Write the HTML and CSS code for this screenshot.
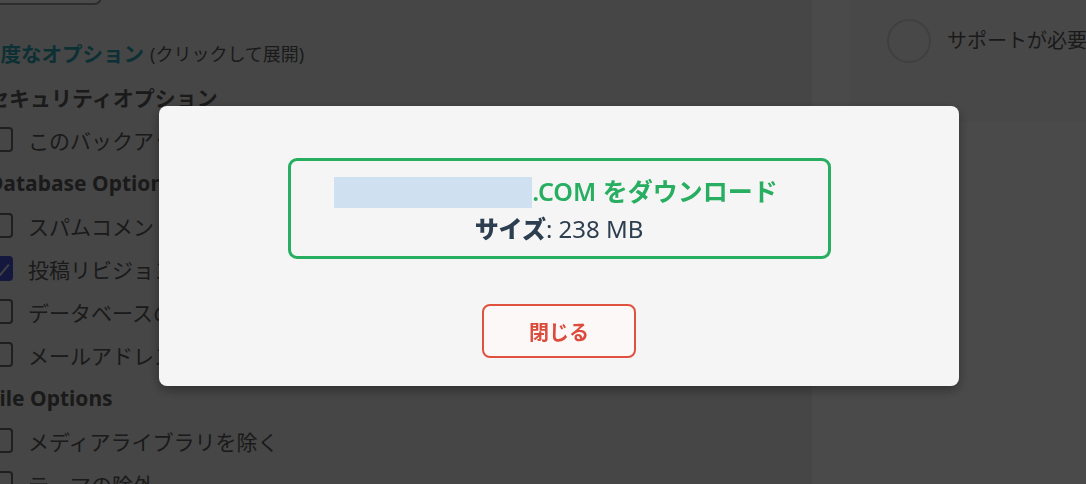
FILE: index.html
```html
<!DOCTYPE html>
<html lang="ja">
<head>
  <meta charset="UTF-8">
  <meta name="viewport" content="width=device-width, initial-scale=1">
  <title>バックアップのダウンロード</title>
  <link rel="stylesheet" href="styles.css">
</head>
<body>

<div class="page">
  <div class="main">
    <div class="options">
      <div class="top-button"></div>

      <div class="advanced">
        <a href="#" class="advanced-link">高度なオプション</a>
        <span class="advanced-hint">(クリックして展開)</span>
      </div>

      <h4 class="section-title">セキュリティオプション</h4>
      <label class="option"><span class="check"></span>このバックアップをパスワードで保護</label>

      <h4 class="section-title">Database Options</h4>
      <label class="option"><span class="check"></span>スパムコメントを除く</label>
      <label class="option"><span class="check checked"></span>投稿リビジョンを除く</label>
      <label class="option"><span class="check"></span>データベースの最適化</label>
      <label class="option"><span class="check"></span>メールアドレスを置換</label>

      <h4 class="section-title">File Options</h4>
      <label class="option"><span class="check"></span>メディアライブラリを除く</label>
      <label class="option"><span class="check"></span>テーマの除外</label>
    </div>
  </div>

  <div class="sidebar">
    <div class="support">
      <span class="support-icon"></span>
      <span class="support-text">サポートが必要ですか？</span>
    </div>
  </div>
</div>

<div class="backdrop">
  <div class="modal">
    <div class="download-box">
      <div class="download-title">
        <span class="domain"></span>.COM をダウンロード
      </div>
      <div class="download-size"><b>サイズ</b>: 238 MB</div>
    </div>
    <button type="button" class="close-btn">閉じる</button>
  </div>
</div>

</body>
</html>
```

FILE: styles.css
```css
body {
  margin: 0;
  font-family: "Noto Sans", "Noto Sans CJK JP", sans-serif;
  background: #f0f0f1;
  overflow: hidden;
}

.page {
  display: flex;
  height: 484px;
}

.main {
  width: 812px;
  flex-shrink: 0;
  overflow: hidden;
}

.options {
  margin-left: -12px;
  color: #5c5c5c;
}

.top-button {
  width: 114px;
  height: 30px;
  margin-top: -25px;
  margin-bottom: 25px;
  border: 2px solid #9a9a9a;
  border-radius: 8px;
  box-sizing: border-box;
  background: #fff;
}

.advanced {
  height: 45px;
  display: flex;
  align-items: center;
  gap: 6px;
  margin-left: -8px;
  white-space: nowrap;
}

.advanced-link {
  color: #2aa4b0;
  font-size: 20.5px;
  font-weight: 700;
  text-decoration: none;
}

.advanced-hint {
  font-size: 18px;
}

.section-title {
  margin: 0;
  height: 43px;
  display: flex;
  align-items: center;
  font-size: 21px;
  font-weight: 700;
  white-space: nowrap;
}

.option {
  height: 43px;
  display: flex;
  align-items: center;
  gap: 15px;
  font-size: 21px;
  white-space: nowrap;
}

.check {
  width: 25px;
  height: 25px;
  border: 2px solid #6a6a6a;
  border-radius: 4px;
  box-sizing: border-box;
  position: relative;
  flex-shrink: 0;
}

.check.checked {
  background: #4654d8;
  border-color: #4654d8;
}

.check.checked::after {
  content: "";
  position: absolute;
  left: 8px;
  top: 3px;
  width: 6px;
  height: 12px;
  border: solid #e0e0e0;
  border-width: 0 2px 2px 0;
  transform: rotate(40deg);
}

.sidebar {
  flex: 1;
  min-width: 0;
  background: #fff;
}

.support {
  margin-left: 38px;
  height: 122px;
  box-sizing: border-box;
  padding: 19px 0 0 37px;
  background: #f7f7f7;
  display: flex;
  align-items: flex-start;
  gap: 16px;
  white-space: nowrap;
  overflow: hidden;
}

.support-icon {
  width: 44px;
  height: 44px;
  border: 2px solid #d8d8d8;
  border-radius: 50%;
  box-sizing: border-box;
  flex-shrink: 0;
}

.support-text {
  font-size: 20px;
  line-height: 44px;
  color: #5c5c5c;
}

.backdrop {
  position: fixed;
  inset: 0;
  background: rgba(0, 0, 0, 0.71);
}

.modal {
  width: 800px;
  height: 280px;
  margin: 106px 0 0 159px;
  padding-top: 52px;
  box-sizing: border-box;
  background: #f5f5f5;
  border-radius: 8px;
  box-shadow: 0 4px 12px rgba(0, 0, 0, 0.35);
  display: flex;
  flex-direction: column;
  align-items: center;
}

.download-box {
  width: 543px;
  height: 101px;
  box-sizing: border-box;
  padding-top: 11px;
  border: 3px solid #27ae60;
  border-radius: 9px;
  text-align: center;
}

.download-title {
  height: 38px;
  line-height: 38px;
  font-size: 25px;
  font-weight: 600;
  color: #27ae60;
  padding-right: 6px;
}

.domain {
  display: inline-block;
  width: 198px;
  height: 31px;
  background: #cfe0f1;
  vertical-align: middle;
  margin-top: -4px;
}

.download-size {
  height: 38px;
  line-height: 38px;
  font-size: 24px;
  color: #2c3e50;
}

.download-size b {
  font-weight: 800;
}

.close-btn {
  width: 154px;
  height: 54px;
  margin-top: 45px;
  border: 2px solid #e0523f;
  border-radius: 8px;
  background: #fcf8f7;
  color: #dc4c3c;
  font-family: inherit;
  font-size: 20px;
  font-weight: 700;
  cursor: pointer;
}
```
